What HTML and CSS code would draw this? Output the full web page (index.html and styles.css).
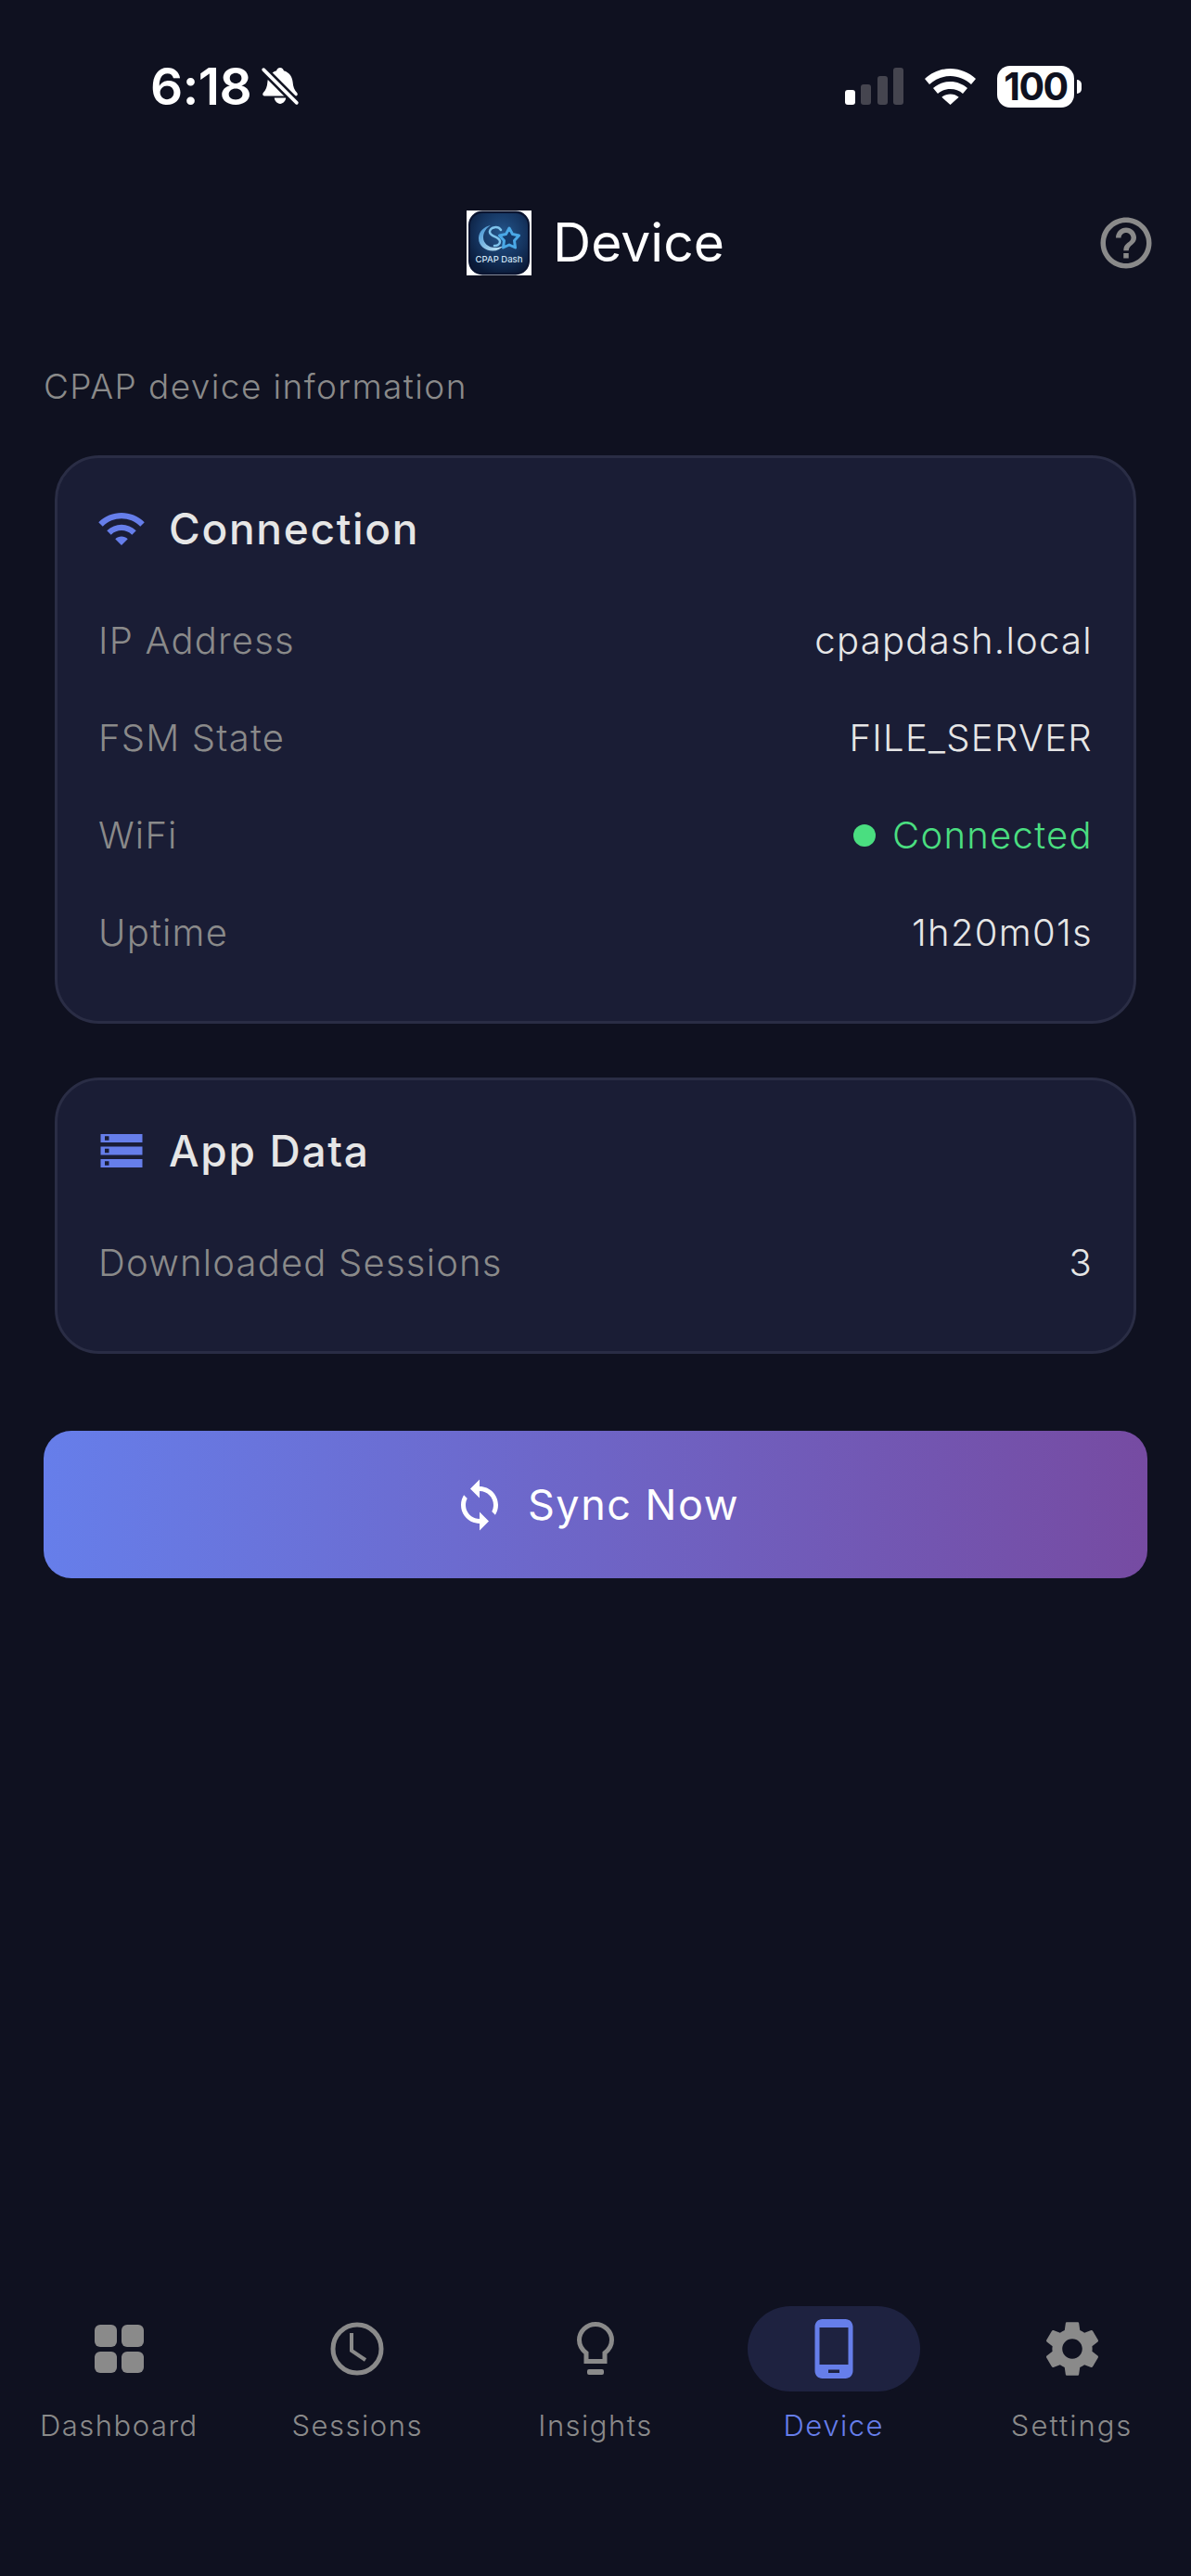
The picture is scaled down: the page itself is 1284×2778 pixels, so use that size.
FILE: index.html
```html
<!DOCTYPE html>
<html lang="en">
<head>
<meta charset="utf-8">
<title>Device</title>
<link rel="stylesheet" href="styles.css">
</head>
<body>
<div class="screen">
  <div class="status">
    <div class="status-left">
      <span class="time">6:18</span>
      <svg class="bell" viewBox="0 0 40 40"><path fill="#fff" d="M20 1c2 0 3.400 1.300 3.700 3 6 1.700 8.800 6.500 9.300 12 .3 4.500 1.500 8 4.500 11 1 1.500 0 3-1.500 3H4c-1.500 0-2.500-1.500-1.500-3 3-3 4.200-6.500 4.500-11 .5-5.500 3.300-10.300 9.300-12C16.600 2.300 18 1 20 1z"/><path fill="#fff" d="M14 32h12c-.5 3.500-3 6-6 6s-5.500-2.500-6-6z"/><path stroke="#0f1120" stroke-width="8.500" d="M0 0l40 40"/><path stroke="#fff" stroke-width="3.500" stroke-linecap="round" d="M3 3l34 34"/></svg>
    </div>
    <div class="status-right">
      <div class="signal"><i class="bar b1"></i><i class="bar b2"></i><i class="bar b3"></i><i class="bar b4"></i></div>
      <svg class="swifi" viewBox="0 0 55 39"><path fill="#fff" d="M27.500 0C38 0 47.500 4 55 11l-5 6C44 11.500 36 8 27.500 8S11 11.500 5 17L0 11C7.500 4 17 0 27.500 0z"/><path fill="#fff" d="M27.500 14c7 0 13.500 2.700 18.500 7l-5 6c-3.500-3.200-8.500-5-13.500-5s-10 1.800-13.500 5l-5-6c5-4.300 11.500-7 18.500-7z"/><path fill="#fff" d="M27.500 27.500c3.500 0 6.800 1.200 9.200 3.300L27.500 39l-9.200-8.200c2.400-2.100 5.700-3.300 9.200-3.300z"/></svg>
      <div class="battery"><span class="batt-body">100</span><i class="batt-tip"></i></div>
    </div>
  </div>

  <header class="header">
    <div class="header-spacer"></div>
    <div class="brand">
      <svg class="logo" viewBox="0 0 70 70">
        <defs>
          <radialGradient id="lg" cx="0.550" cy="0.350" r="0.700"><stop offset="0" stop-color="#24568c"/><stop offset="0.600" stop-color="#15345f"/><stop offset="1" stop-color="#0a1a38"/></radialGradient>
          <linearGradient id="moon" x1="0" y1="0" x2="1" y2="1"><stop offset="0" stop-color="#3d8fd0"/><stop offset="1" stop-color="#c8eaf8"/></linearGradient>
        </defs>
        <rect width="70" height="70" fill="#fff"/>
        <rect x="2" y="0.500" width="66" height="69" rx="15" fill="#0a1430"/>
        <rect x="4" y="3" width="62" height="64" rx="13" fill="url(#lg)"/>
        <path fill="url(#moon)" d="M26 16c-8 1.500-13 7.500-13 14 0 8 7 13.500 15 13.500 5 0 9-2 11.500-5.500-2.500 1.500-5.500 2-8.500 2-8 0-13-5-13-11 0-5 3-10 8-13z"/>
        <path fill="none" stroke="#7fc4ec" stroke-width="2.500" stroke-linecap="round" d="M37 21c-3-4.500-11-3.500-12 1.500-1 6 11 5 11 11 0 3-3 5-6 4.500"/>
        <path fill="#143a6a" stroke="#4aa8e6" stroke-width="3" stroke-linejoin="round" d="M46 19l3.500 6.500 7 1.500-5 5.500 1 7.500-6.500-3-6.500 3 1-7.500-5-5.500 7-1.500z"/>
        <text class="logo-text" x="35" y="56">CPAP Dash</text>
      </svg>
      <h1 class="title">Device</h1>
    </div>
    <svg class="help" viewBox="0 0 24 24"><path fill="#8a8a8a" d="M11 18h2v-2h-2v2zm1-16C6.480 2 2 6.480 2 12s4.480 10 10 10 10-4.480 10-10S17.520 2 12 2zm0 18c-4.410 0-8-3.590-8-8s3.590-8 8-8 8 3.590 8 8-3.590 8-8 8zm0-14c-2.210 0-4 1.790-4 4h2c0-1.100.9-2 2-2s2 .9 2 2c0 2-3 1.750-3 5h2c0-2.250 3-2.500 3-5 0-2.210-1.790-4-4-4z"/></svg>
  </header>

  <main class="content">
    <p class="caption">CPAP device information</p>

    <section class="card">
      <div class="card-head">
        <svg class="card-icon" viewBox="0 0 24 24"><path fill="#667eea" d="M1 9l2 2c4.970-4.970 13.030-4.970 18 0l2-2C16.930 2.930 7.080 2.930 1 9zm8 8l3 3 3-3c-1.650-1.660-4.340-1.660-6 0zm-4-4l2 2c2.760-2.760 7.240-2.760 10 0l2-2C15.140 9.140 8.870 9.140 5 13z"/></svg>
        <h2 class="card-title">Connection</h2>
      </div>
      <div class="row"><span class="label">IP Address</span><span class="value">cpapdash.local</span></div>
      <div class="row"><span class="label">FSM State</span><span class="value">FILE_SERVER</span></div>
      <div class="row"><span class="label">WiFi</span><span class="value value-ok"><i class="dot"></i>Connected</span></div>
      <div class="row"><span class="label">Uptime</span><span class="value">1h20m01s</span></div>
    </section>

    <section class="card">
      <div class="card-head">
        <svg class="card-icon" viewBox="0 0 24 24"><path fill="#667eea" d="M2 20h20v-4H2v4zm2-3h2v2H4v-2zM2 4v4h20V4H2zm4 3H4V5h2v2zm-4 7h20v-4H2v4zm2-3h2v2H4v-2z"/></svg>
        <h2 class="card-title">App Data</h2>
      </div>
      <div class="row"><span class="label">Downloaded Sessions</span><span class="value">3</span></div>
    </section>

    <button class="sync">
      <svg class="sync-icon" viewBox="0 0 24 24"><path fill="#fff" d="M12 4V1L8 5l4 4V6c3.310 0 6 2.690 6 6 0 1.010-.25 1.970-.7 2.800l1.460 1.460C19.540 15.030 20 13.570 20 12c0-4.420-3.580-8-8-8zm0 14c-3.310 0-6-2.690-6-6 0-1.010.25-1.970.7-2.800L5.240 7.740C4.460 8.970 4 10.430 4 12c0 4.420 3.580 8 8 8v3l4-4-4-4v3z"/></svg>
      <span>Sync Now</span>
    </button>
  </main>

  <nav class="tabs">
    <div class="tab">
      <div class="tab-pill">
        <svg class="tab-icon" viewBox="0 0 72 72"><g fill="#8a8a8a"><rect x="10" y="10" width="24" height="24" rx="6"/><rect x="39" y="10" width="24" height="24" rx="6"/><rect x="10" y="39" width="24" height="23" rx="6"/><rect x="39" y="39" width="24" height="23" rx="6"/></g></svg>
      </div>
      <span class="tab-label">Dashboard</span>
    </div>
    <div class="tab">
      <div class="tab-pill">
        <svg class="tab-icon" viewBox="0 0 72 72"><circle cx="36" cy="36" r="26" fill="none" stroke="#8a8a8a" stroke-width="5"/><path fill="none" stroke="#8a8a8a" stroke-width="4" d="M28 20v19l15 10" transform="translate(2 -1)"/></svg>
      </div>
      <span class="tab-label">Sessions</span>
    </div>
    <div class="tab">
      <div class="tab-pill">
        <svg class="tab-icon" viewBox="0 0 72 72"><path fill="none" stroke="#8a8a8a" stroke-width="5" d="M36 9.500c-9.500 0-17.500 7.500-17.500 17 0 6 3 10.500 7.500 14v9h20v-9c4.500-3.500 7.500-8 7.500-14 0-9.500-8-17-17.500-17z"/><rect x="27" y="58" width="18" height="6" rx="2" fill="#8a8a8a"/></svg>
      </div>
      <span class="tab-label">Insights</span>
    </div>
    <div class="tab tab-active">
      <div class="tab-pill">
        <svg class="tab-icon" viewBox="0 0 72 72"><path fill="#667eea" fill-rule="evenodd" d="M23.500 4h25c4.400 0 8 3.600 8 8v48c0 4.400-3.600 8-8 8h-25c-4.400 0-8-3.600-8-8V12c0-4.400 3.600-8 8-8zM20.500 13v40h31V13zM30 58.500v3.500h12v-3.500z"/></svg>
      </div>
      <span class="tab-label">Device</span>
    </div>
    <div class="tab">
      <div class="tab-pill">
        <svg class="tab-icon" viewBox="0 0 24 24"><path fill="#8a8a8a" d="M19.140,12.940c0.040-0.300,0.060-0.610,0.060-0.940c0-0.320-0.020-0.640-0.070-0.940l2.030-1.580c0.180-0.140,0.230-0.410,0.120-0.610l-1.920-3.320c-0.120-0.220-0.370-0.290-0.590-0.220l-2.390,0.960c-0.500-0.380-1.030-0.700-1.620-0.940L14.400,2.810c-0.040-0.240-0.240-0.410-0.480-0.410h-3.840c-0.240,0-0.430,0.170-0.470,0.410L9.250,5.350C8.660,5.590,8.120,5.920,7.630,6.290L5.240,5.330c-0.220-0.080-0.470,0-0.590,0.220L2.740,8.870C2.620,9.080,2.660,9.340,2.860,9.480l2.030,1.580C4.840,11.360,4.800,11.690,4.800,12s0.020,0.640,0.070,0.940l-2.030,1.580c-0.180,0.140-0.230,0.410-0.120,0.610l1.920,3.320c0.120,0.220,0.370,0.290,0.590,0.220l2.390-0.960c0.500,0.380,1.030,0.700,1.620,0.940l0.360,2.540c0.050,0.240,0.240,0.410,0.480,0.410h3.840c0.240,0,0.440-0.170,0.470-0.410l0.360-2.540c0.590-0.240,1.130-0.560,1.620-0.940l2.390,0.960c0.220,0.080,0.470,0,0.590-0.220l1.920-3.320c0.120-0.220,0.070-0.470-0.120-0.610L19.140,12.940z M12,15.600c-1.980,0-3.600-1.620-3.600-3.600s1.620-3.600,3.600-3.600s3.600,1.620,3.600,3.600S13.980,15.600,12,15.600z"/></svg>
      </div>
      <span class="tab-label tab-label-wide">Settings</span>
    </div>
  </nav>
</div>
</body>
</html>
```

FILE: styles.css
```css
* { box-sizing: border-box; }
html, body { margin: 0; padding: 0; background: #0f1120; }
body { font-family: "Inter", "Liberation Sans", sans-serif; color: #e6e6e6; }

.screen { width: 1284px; height: 2778px; display: flex; flex-direction: column; overflow: hidden; }

/* status bar */
.status { height: 186px; flex: none; display: flex; justify-content: space-between; align-items: center; padding: 0 118px 0 162px; }
.status-left { display: flex; align-items: center; gap: 10px; }
.time { font-size: 55px; font-weight: 600; color: #fff; line-height: 60px; letter-spacing: -0.5px; }
.bell { width: 42px; height: 42px; display: block; }
.status-right { display: flex; align-items: center; }
.signal { display: flex; align-items: flex-end; gap: 6.500px; height: 40px; margin-right: 23px; }
.bar { display: block; width: 11px; border-radius: 3px; background: #45454f; }
.b1 { height: 16px; background: #fff; }
.b2 { height: 22px; }
.b3 { height: 31px; }
.b4 { height: 40px; }
.swifi { width: 55px; height: 39px; display: block; margin-right: 23px; }
.battery { display: flex; align-items: center; gap: 3px; }
.batt-body { width: 83px; height: 45px; border-radius: 14px; background: #fff; color: #0f1120; font-size: 41px; font-weight: 700; line-height: 45px; text-align: center; letter-spacing: -1.500px; }
.batt-tip { display: block; width: 5px; height: 15px; background: #fff; border-radius: 0 5px 5px 0; }

/* header */
.header { height: 152px; flex: none; display: grid; grid-template-columns: 1fr auto 1fr; align-items: center; padding: 0 37px; }
.brand { display: flex; align-items: center; gap: 23px; }
.logo { width: 70px; height: 70px; display: block; }
.logo-text { font-family: "Inter", "Liberation Sans", sans-serif; font-size: 9.500px; font-weight: 500; fill: #cfe2f3; text-anchor: middle; }
.title { margin: 0; font-size: 57px; font-weight: 400; line-height: 72px; color: #fff; letter-spacing: 0; }
.help { width: 66px; height: 66px; display: block; justify-self: end; }

/* content */
.content { flex: none; padding: 0 47px; display: flex; flex-direction: column; }
.caption { margin: 55px 0 50px; font-size: 37px; font-weight: 350; line-height: 48px; color: #8a8a8a; letter-spacing: 1.400px; }

.card { margin: 0 12px 58px; padding: 40px 44px 43px; border: 3px solid #2a2d45; border-radius: 48px; background: #1a1d35; }
.card-head { display: flex; align-items: center; height: 72px; margin-bottom: 32px; gap: 24px; }
.card-icon { width: 54px; height: 54px; display: block; flex: none; margin-left: -2px; }
.card-title { margin: 0; font-size: 46px; font-weight: 500; line-height: 60px; color: #e6e6e6; letter-spacing: 1.700px; }

.row { height: 105px; display: flex; justify-content: space-between; align-items: center; }
.label { font-size: 40px; font-weight: 350; color: #8a8a8a; letter-spacing: 1.200px; line-height: 48px; }
.value { font-size: 40px; font-weight: 350; color: #e6e6e6; letter-spacing: 1.300px; line-height: 48px; }
.value-ok { color: #4ade80; display: flex; align-items: center; gap: 18px; }
.dot { display: block; width: 24px; height: 24px; border-radius: 50%; background: #4ade80; }

.sync { margin-top: 25px; height: 159px; border: 0; border-radius: 30px; background: linear-gradient(90deg, #667eea, #764ba2); display: flex; align-items: center; justify-content: center; gap: 22px; font-family: inherit; font-size: 45px; font-weight: 400; color: #fff; letter-spacing: 1.500px; padding: 0; }
.sync-icon { width: 60px; height: 60px; display: block; }

/* tabs */
.tabs { margin-top: auto; flex: none; display: grid; grid-template-columns: repeat(5, 1fr); padding-bottom: 140px; }
.tab { display: flex; flex-direction: column; align-items: center; gap: 15px; }
.tab-pill { width: 186px; height: 92px; border-radius: 46px; display: flex; align-items: center; justify-content: center; }
.tab-icon { width: 72px; height: 72px; display: block; }
.tab-label { font-size: 31px; font-weight: 300; line-height: 44px; color: #8a8a8a; letter-spacing: 1.500px; }
.tab-label-wide { letter-spacing: 2px; }
.tab-active .tab-pill { background: #1e2240; }
.tab-active .tab-label { color: #667eea; }
```
